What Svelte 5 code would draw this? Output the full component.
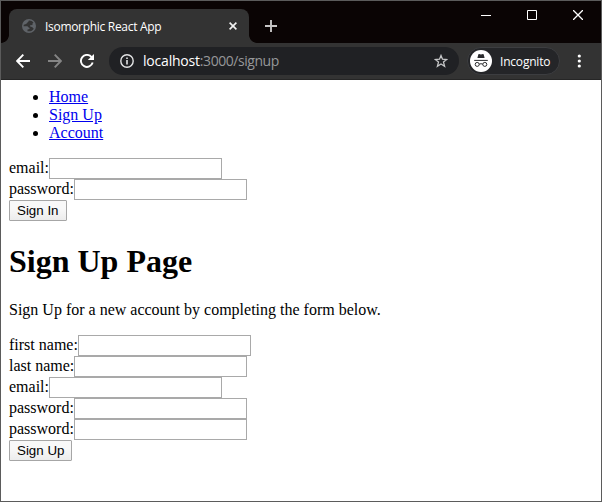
<script>
  const links = ['Home', 'Sign Up', 'Account'];
  const signInFields = [
    { label: 'email', type: 'text' },
    { label: 'password', type: 'password' }
  ];
  const signUpFields = [
    { label: 'first name', type: 'text' },
    { label: 'last name', type: 'text' },
    { label: 'email', type: 'text' },
    { label: 'password', type: 'password' },
    { label: 'password', type: 'password' }
  ];
</script>

{#snippet form(fields, action)}
  <form onsubmit={(e) => e.preventDefault()}>
    {#each fields as field}
      <label class="row"><span>{field.label}:</span><input type={field.type} /></label>
    {/each}
    <button class="submit">{action}</button>
  </form>
{/snippet}

<div class="window">
  <header class="titlebar">
    <div class="tab">
      <svg class="globe" width="14" height="14" viewBox="0 0 14 14">
        <circle cx="7" cy="7" r="7" fill="#5f6368" />
        <path d="M6.9 1.6C6.2 2.2 6.8 3 5.6 3.5C4.6 3.8 4.9 4.7 4 5.1L1.8 5.7L1.5 7.2L5 7.3C6.5 7.5 6 8.6 7.2 8.8C8 9 7.7 10.1 6.7 10.2L5.5 10.4L5.5 12.2C8.3 12.8 10.6 11.8 11.8 9.8C11 9.3 10.8 8.4 9.8 8.1L8.2 7.4L8.1 6.2L10.4 5.9L10.6 4.2L11.5 3.7C10.4 2.3 8.9 1.5 6.9 1.6Z" fill="#333333" />
      </svg>
      <span class="tab-title">Isomorphic React App</span>
      <svg class="tab-close" width="8" height="8" viewBox="0 0 8 8">
        <path d="M.6.6L7.4 7.4M7.4.6L.6 7.4" stroke="#f1f1f1" stroke-width="1.6" />
      </svg>
    </div>
    <svg class="new-tab" width="12" height="12" viewBox="0 0 12 12">
      <path d="M0 6H12M6 0V12" stroke="#c6c5c5" stroke-width="1.9" />
    </svg>
    <div class="controls">
      <svg width="10" height="10" viewBox="0 0 10 10"><path d="M0 5.5H10" stroke="#fff" /></svg>
      <svg width="10" height="10" viewBox="0 0 10 10"><path d="M.5.5H9.5V9.5H.5Z" fill="none" stroke="#fff" /></svg>
      <svg width="10" height="10" viewBox="0 0 10 10"><path d="M0 0L10 10M10 0L0 10" stroke="#fff" stroke-width="1.3" /></svg>
    </div>
  </header>

  <div class="toolbar">
    <svg class="nav" width="14" height="14" viewBox="0 0 14 14">
      <path d="M14 7H1.4M7.3.7L1.1 7L7.3 13.3" fill="none" stroke="#fff" stroke-width="1.9" />
    </svg>
    <svg class="nav forward" width="14" height="14" viewBox="0 0 14 14">
      <path d="M0 7H12.6M6.7.7L12.9 7L6.7 13.3" fill="none" stroke="#858585" stroke-width="1.9" />
    </svg>
    <svg class="nav reload" width="14" height="14" viewBox="0 0 14 14">
      <path d="M11.6 3.1A6 6 0 1 0 12.7 8.6" fill="none" stroke="#fff" stroke-width="1.9" />
      <path d="M14 0V6.1H7.8Z" fill="#fff" />
    </svg>
    <div class="address">
      <svg width="14" height="14" viewBox="0 0 14 14">
        <circle cx="7" cy="7" r="6.2" fill="none" stroke="#e3e4e5" stroke-width="1.4" />
        <path d="M7 6V10.5M7 3.4V5" stroke="#e3e4e5" stroke-width="1.6" />
      </svg>
      <span class="url">localhost<span class="path">:3000/signup</span></span>
      <svg class="star" width="14" height="14" viewBox="0 0 14 14">
        <path d="M7 1.5L8.5 5.2L12.7 5.5L9.5 8.1L10.6 12.3L7 10L3.4 12.3L4.5 8.1L1.3 5.5L5.5 5.2Z" fill="none" stroke="#c5c6c7" stroke-width="1.3" />
      </svg>
    </div>
    <div class="incognito">
      <svg width="22" height="22" viewBox="0 0 22 22">
        <circle cx="11" cy="11" r="11" fill="#fff" />
        <path d="M7.4 8L8.3 4.4Q8.5 3.8 9.1 4L11 4.5L12.9 4Q13.5 3.8 13.7 4.4L14.6 8Z" fill="#292a2d" />
        <path d="M4.2 10.4H17.8" stroke="#292a2d" />
        <g fill="none" stroke="#292a2d">
          <circle cx="7.2" cy="14.4" r="2" />
          <circle cx="14.8" cy="14.4" r="2" />
          <path d="M9.2 14.2Q11 13.2 12.8 14.2" />
        </g>
      </svg>
      <span>Incognito</span>
    </div>
    <svg class="menu" width="4" height="14" viewBox="0 0 4 14" fill="#fff">
      <circle cx="2.3" cy="2" r="1.6" /><circle cx="2.3" cy="7" r="1.6" /><circle cx="2.3" cy="12" r="1.6" />
    </svg>
  </div>

  <main>
    <ul>
      {#each links as link}
        <li><a href="#top">{link}</a></li>
      {/each}
    </ul>
    {@render form(signInFields, 'Sign In')}
    <h1>Sign Up Page</h1>
    <p>Sign Up for a new account by completing the form below.</p>
    {@render form(signUpFields, 'Sign Up')}
  </main>
</div>

<style>
  :global(body) {
    margin: 0;
    overflow: hidden;
  }
  .window {
    box-sizing: border-box;
    width: 602px;
    height: 502px;
    border: 1px solid #5b5b5b;
    display: flex;
    flex-direction: column;
    background: #fff;
  }
  svg {
    display: block;
    flex: none;
  }
  .titlebar {
    height: 42px;
    flex: none;
    display: flex;
    background: #0a0404;
    font-family: 'Open Sans', 'Noto Sans', sans-serif;
  }
  .tab {
    box-sizing: border-box;
    position: relative;
    width: 240px;
    height: 34px;
    margin: 8px 0 0 8px;
    padding: 0 12px 0 13px;
    display: flex;
    align-items: center;
    border-radius: 8px 8px 0 0;
    background: #333;
    color: #fff;
    font-size: 12px;
  }
  .tab::before,
  .tab::after {
    content: '';
    position: absolute;
    bottom: 0;
    width: 8px;
    height: 8px;
  }
  .tab::before {
    left: -8px;
    background: radial-gradient(circle at 0 0, transparent 7.5px, #333 8.2px);
  }
  .tab::after {
    right: -8px;
    background: radial-gradient(circle at 100% 0, transparent 7.5px, #333 8.2px);
  }
  .tab-title {
    margin-left: 9px;
    flex: 1;
    white-space: nowrap;
    letter-spacing: -0.3px;
  }
  .new-tab {
    margin: 19px 0 0 16px;
  }
  .controls {
    display: flex;
    gap: 36px;
    margin: 9px 18px 0 auto;
  }
  .toolbar {
    box-sizing: border-box;
    height: 37px;
    flex: none;
    display: flex;
    align-items: center;
    padding: 0 20px 0 15px;
    border-bottom: 1px solid #262626;
    background: #333;
    font-family: 'Open Sans', 'Noto Sans', sans-serif;
  }
  .forward,
  .reload {
    margin-left: 18px;
  }
  .address {
    box-sizing: border-box;
    width: 350px;
    height: 28px;
    margin-left: 15px;
    padding: 0 11px;
    display: flex;
    align-items: center;
    border-radius: 14px;
    background: #202124;
  }
  .url {
    flex: 1;
    margin-left: 9px;
    color: #fff;
    font-size: 14px;
    line-height: 20px;
    letter-spacing: -0.2px;
  }
  .path {
    color: #969799;
    letter-spacing: -0.45px;
  }
  .incognito {
    box-sizing: border-box;
    width: 93px;
    height: 28px;
    margin-left: 8px;
    padding-left: 2px;
    display: flex;
    align-items: center;
    border: 1px solid #3c3d40;
    border-radius: 14px;
    background: #242528;
    color: #fff;
    font-size: 12px;
  }
  .incognito span {
    margin-left: 8px;
    letter-spacing: -0.2px;
  }
  .menu {
    margin-left: auto;
  }
  main {
    flex: 1;
    padding: 8px;
    font: 16px/18px 'Liberation Serif', 'Times New Roman', serif;
    color: #000;
  }
  ul {
    margin: 0 0 16px;
    padding: 0 0 0 40px;
  }
  a {
    color: #0000ee;
    text-decoration: underline;
  }
  form {
    margin: 0;
  }
  .row {
    display: flex;
    align-items: flex-start;
    height: 21px;
  }
  .row span {
    padding-top: 1px;
  }
  input {
    box-sizing: border-box;
    width: 173px;
    height: 21px;
    margin: 0;
    padding: 1px;
    border: 1px solid #a9a9a9;
    border-radius: 0;
    background: #fff;
    outline: none;
  }
  .submit {
    display: block;
    box-sizing: border-box;
    height: 21px;
    margin: 0;
    padding: 1px 7px;
    border: 1px solid #a6a6a6;
    border-radius: 1px;
    background: linear-gradient(#f8f8f8 40%, #ececec);
    color: #000;
    font: 13.333px/17px 'Liberation Sans', Arial, sans-serif;
  }
  h1 {
    margin: 22px 0 21.44px;
    font-size: 32px;
    line-height: 37px;
  }
  p {
    margin: 0 0 16px;
  }
</style>
